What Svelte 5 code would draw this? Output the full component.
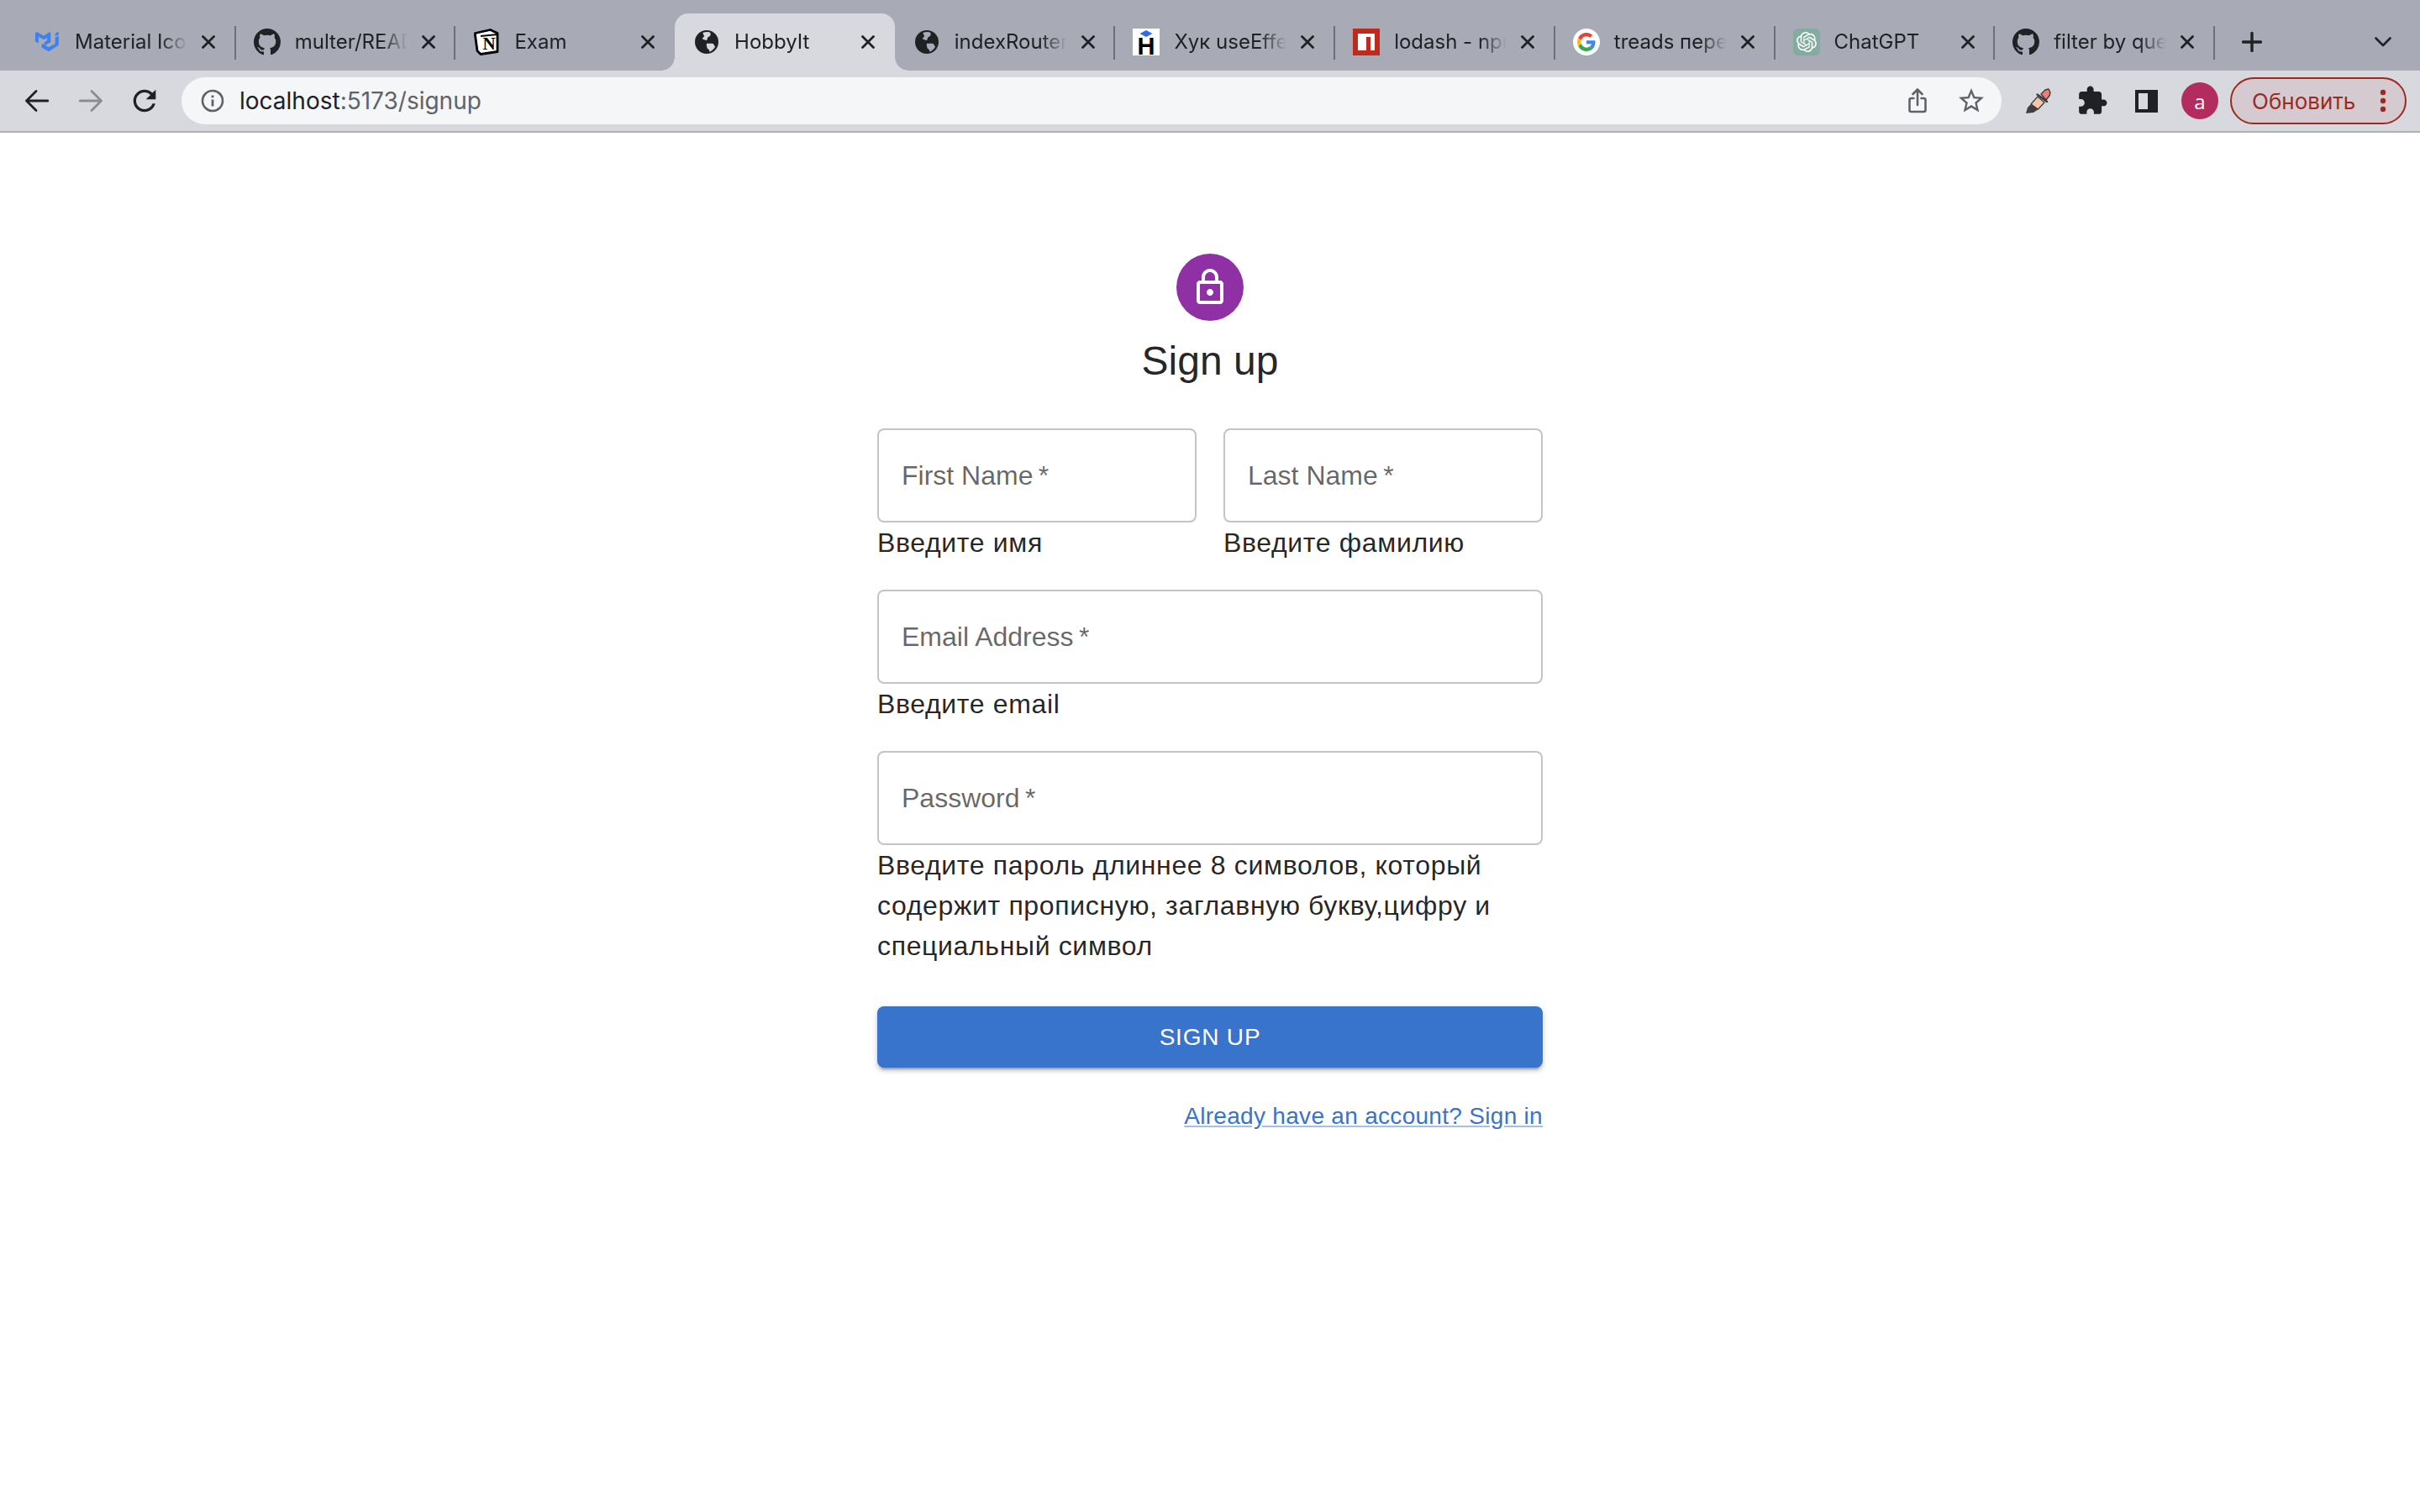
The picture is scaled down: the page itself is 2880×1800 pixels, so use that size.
<script>
  const tabs = [
    { title: 'Material Icons', icon: 'mui' },
    { title: 'multer/README.md', icon: 'github' },
    { title: 'Exam', icon: 'notion' },
    { title: 'HobbyIt', icon: 'globe', active: true },
    { title: 'indexRouter.js', icon: 'globe' },
    { title: 'Хук useEffect', icon: 'hook' },
    { title: 'lodash - npm', icon: 'npm' },
    { title: 'treads перевод', icon: 'google' },
    { title: 'ChatGPT', icon: 'gpt' },
    { title: 'filter by query', icon: 'github' }
  ];

  const noDivider = [2, 3];

  const githubPath = 'M8 0C3.58 0 0 3.58 0 8c0 3.54 2.29 6.53 5.47 7.59.4.07.55-.17.55-.38 0-.19-.01-.82-.01-1.49-2.01.37-2.53-.49-2.69-.94-.09-.23-.48-.94-.82-1.13-.28-.15-.68-.52-.01-.53.63-.01 1.08.58 1.23.82.72 1.21 1.87.87 2.33.66.07-.52.28-.87.51-1.07-1.78-.2-3.64-.89-3.64-3.95 0-.87.31-1.59.82-2.15-.08-.2-.36-1.02.08-2.12 0 0 .67-.21 2.2.82.64-.18 1.32-.27 2-.27.68 0 1.36.09 2 .27 1.53-1.04 2.2-.82 2.2-.82.44 1.1.16 1.92.08 2.12.51.56.82 1.27.82 2.15 0 3.07-1.87 3.75-3.65 3.95.29.25.54.73.54 1.48 0 1.07-.01 1.93-.01 2.2 0 .21.15.46.55.38A8.013 8.013 0 0016 8c0-4.42-3.58-8-8-8z';
  const gptPath = 'M22.2819 9.8211a5.9847 5.9847 0 0 0-.5157-4.9108 6.0462 6.0462 0 0 0-6.5098-2.9A6.0651 6.0651 0 0 0 4.9807 4.1818a5.9847 5.9847 0 0 0-3.9977 2.9 6.0462 6.0462 0 0 0 .7427 7.0966 5.98 5.98 0 0 0 .511 4.9107 6.051 6.051 0 0 0 6.5146 2.9001A5.9847 5.9847 0 0 0 13.2599 24a6.0557 6.0557 0 0 0 5.7718-4.2058 5.9894 5.9894 0 0 0 3.9977-2.9001 6.0557 6.0557 0 0 0-.7475-7.0729zm-9.022 12.6081a4.4755 4.4755 0 0 1-2.8764-1.0408l.1419-.0804 4.7783-2.7582a.7948.7948 0 0 0 .3927-.6813v-6.7369l2.02 1.1686a.071.071 0 0 1 .038.052v5.5826a4.504 4.504 0 0 1-4.4945 4.4944zm-9.6607-4.1254a4.4708 4.4708 0 0 1-.5346-3.0137l.142.0852 4.783 2.7582a.7712.7712 0 0 0 .7806 0l5.8428-3.3685v2.3324a.0804.0804 0 0 1-.0332.0615L9.74 19.9502a4.4992 4.4992 0 0 1-6.1408-1.6464zM2.3408 7.8956a4.485 4.485 0 0 1 2.3655-1.9728V11.6a.7664.7664 0 0 0 .3879.6765l5.8144 3.3543-2.0201 1.1685a.0757.0757 0 0 1-.071 0l-4.8303-2.7865A4.504 4.504 0 0 1 2.3408 7.872zm16.5963 3.8558L13.1038 8.364 15.1192 7.2a.0757.0757 0 0 1 .071 0l4.8303 2.7913a4.4944 4.4944 0 0 1-.6765 8.1042v-5.6772a.79.79 0 0 0-.407-.667zm2.0107-3.0231l-.142-.0852-4.7735-2.7818a.7759.7759 0 0 0-.7854 0L9.409 9.2297V6.8974a.0662.0662 0 0 1 .0284-.0615l4.8303-2.7866a4.4992 4.4992 0 0 1 6.6802 4.66zM8.3065 12.863l-2.02-1.1638a.0804.0804 0 0 1-.038-.0567V6.0742a4.4992 4.4992 0 0 1 7.3757-3.4537l-.142.0805L8.704 5.459a.7948.7948 0 0 0-.3927.6813zm1.0976-2.3654l2.602-1.4998 2.6069 1.4998v2.9994l-2.5974 1.4997-2.6067-1.4997Z';
</script>

<div class="browser">
  <div class="tabstrip">
    {#each tabs as tab, i}
      <div class="tab" class:active={tab.active} class:divided={!noDivider.includes(i)}>
        <span class="favicon">
          {#if tab.icon === 'mui'}
            <svg width="28" height="24" viewBox="0 0 28 24"><path fill="#3B82F0" stroke="#3B82F0" stroke-width=".6" stroke-linejoin="round" d="M0 1.5 2 .5 10 5l7-4.500 1 .6V12l-7 4v-3.500l3.200-2V6.400L10 8.800 3.600 5.200V13L0 11zM24 2l3.500-2v3l-3.500 2zM24 7l3.500-2v10.600L16 23l-8-4.600v-4.200l8 4.400 8-4.400z"/></svg>
          {:else if tab.icon === 'github'}
            <svg width="32" height="32" viewBox="0 0 16 16"><path fill="#202124" fill-rule="evenodd" d={githubPath}/></svg>
          {:else if tab.icon === 'notion'}
            <svg width="32" height="32" viewBox="0 0 32 32">
              <path fill="#fff" stroke="#000" stroke-width="2.8" stroke-linejoin="round" d="M2.500 5.500 20.500 1.500 29 5.500V27.500L9 30.500 5 26.500 2.500 8z"/>
              <path fill="#000" d="M9 8 29 6v2L9 10z"/>
              <text x="19" y="25" text-anchor="middle" class="notion-n">N</text>
            </svg>
          {:else if tab.icon === 'globe'}
            <svg width="28" height="28" viewBox="0 0 16 16"><path fill="#202124" fill-rule="evenodd" d="M8 0a8 8 0 1 0 0 16A8 8 0 0 0 8 0zM5.500 1.600C7.500.9 9.500 1 10.500 1.500l.1 1.500c0 1.200-1.400 1.200-2 2.200-.4.8.2 1.600-1 1.600l-2.100-.6c-.9-.6.3-1.600 1-2.200-.7-.8-1-1.500-1-2.400zM8 9h4c.8.3 1 1.300 1.800 2.200-.9 1.800-2.300 2.900-3.800 3.500-.2-1.200-.5-1.700-1.400-2.100-.6-.6-.2-1.400-.7-2.100z"/></svg>
          {:else if tab.icon === 'hook'}
            <svg width="32" height="32" viewBox="0 0 32 32">
              <rect width="32" height="32" fill="#fff"/>
              <path fill="#2F6BF0" d="M16 2l7.500 4-7.500 4-7.500-4z"/>
              <text x="16" y="31" text-anchor="middle" class="hook-h">Н</text>
            </svg>
          {:else if tab.icon === 'npm'}
            <svg width="32" height="32" viewBox="0 0 32 32"><rect width="32" height="32" fill="#BF2A1D"/><path fill="#fff" d="M6 6h20v20h-5V10h-5v16H6z"/></svg>
          {:else if tab.icon === 'google'}
            <svg width="32" height="32" viewBox="0 0 32 32">
              <circle cx="16" cy="16" r="16" fill="#fff"/>
              <g transform="translate(5 5) scale(.458)">
                <path fill="#EA4335" d="M24 9.500c3.540 0 6.710 1.220 9.210 3.600l6.850-6.850C35.900 2.380 30.470 0 24 0 14.620 0 6.510 5.380 2.560 13.220l7.980 6.190C12.430 13.720 17.740 9.500 24 9.500z"/>
                <path fill="#4285F4" d="M46.980 24.550c0-1.570-.15-3.090-.38-4.550H24v9.020h12.940c-.58 2.960-2.260 5.480-4.780 7.180l7.730 6c4.510-4.180 7.090-10.360 7.090-17.650z"/>
                <path fill="#FBBC05" d="M10.530 28.590c-.48-1.450-.76-2.990-.76-4.590s.27-3.140.76-4.590l-7.980-6.190C.92 16.460 0 20.120 0 24c0 3.880.92 7.540 2.560 10.780l7.970-6.190z"/>
                <path fill="#34A853" d="M24 48c6.480 0 11.930-2.130 15.890-5.810l-7.730-6c-2.150 1.450-4.920 2.300-8.160 2.300-6.260 0-11.570-4.220-13.470-9.910l-7.980 6.190C6.510 42.620 14.620 48 24 48z"/>
              </g>
            </svg>
          {:else if tab.icon === 'gpt'}
            <svg width="32" height="32" viewBox="0 0 32 32">
              <rect width="32" height="32" rx="6" fill="#82AC9D"/>
              <path fill="#fff" transform="translate(4 4)" d={gptPath}/>
            </svg>
          {/if}
        </span>
        <span class="tab-title">{tab.title}</span>
        <svg class="tab-close" width="16" height="16" viewBox="0 0 16 16"><path d="M1.500 1.500l13 13M14.500 1.500l-13 13" stroke="#202124" stroke-width="2.800" stroke-linecap="round"/></svg>
      </div>
    {/each}
    <button class="new-tab" aria-label="New tab">
      <svg width="24" height="24" viewBox="0 0 24 24"><path d="M12 1.500v21M1.500 12h21" stroke="#202124" stroke-width="3.400" stroke-linecap="round"/></svg>
    </button>
    <svg class="tab-search" width="20" height="12" viewBox="0 0 20 12"><path d="M1.500 1.500 10 10l8.500-8.500" fill="none" stroke="#202124" stroke-width="2.600" stroke-linecap="round" stroke-linejoin="round"/></svg>
  </div>

  <div class="toolbar">
    <div class="tool">
      <svg width="28" height="26" viewBox="0 0 28 26"><path d="M27 13H2M13 1.500 1.500 13 13 24.500" fill="none" stroke="#202124" stroke-width="2.800" stroke-linecap="round" stroke-linejoin="round"/></svg>
    </div>
    <div class="tool">
      <svg width="28" height="26" viewBox="0 0 28 26"><path d="M1 13h25M15 1.500 26.500 13 15 24.500" fill="none" stroke="#8B8C90" stroke-width="2.800" stroke-linecap="round" stroke-linejoin="round"/></svg>
    </div>
    <div class="tool">
      <svg width="40" height="40" viewBox="0 0 24 24"><path fill="#202124" d="M17.650 6.350C16.200 4.900 14.210 4 12 4c-4.420 0-7.990 3.580-7.990 8s3.570 8 7.990 8c3.730 0 6.840-2.550 7.730-6h-2.080c-.82 2.330-3.040 4-5.650 4-3.310 0-6-2.690-6-6s2.690-6 6-6c1.660 0 3.140.69 4.220 1.780L13 11h7V4l-2.350 2.350z"/></svg>
    </div>

    <div class="omnibox">
      <svg class="info" width="28" height="28" viewBox="0 0 28 28">
        <circle cx="14" cy="14" r="12" fill="none" stroke="#5F6368" stroke-width="2.600"/>
        <path d="M12.600 12.500h2.800v8h-2.800zM12.600 7.500h2.800v2.800h-2.800z" fill="#5F6368"/>
      </svg>
      <span class="url">localhost<span class="url-rest">:5173/signup</span></span>
      <div class="omni-actions">
        <div class="tool">
          <svg width="24" height="30" viewBox="0 0 24 30"><path d="M7.500 12H4.500a2 2 0 0 0-2 2v12a2 2 0 0 0 2 2h15a2 2 0 0 0 2-2V14a2 2 0 0 0-2-2h-3M12 20V2M6.500 7 12 1.500 17.500 7" fill="none" stroke="#5F6368" stroke-width="2.600" stroke-linecap="round" stroke-linejoin="round"/></svg>
        </div>
        <div class="tool">
          <svg width="36" height="36" viewBox="0 0 24 24"><path fill="#5F6368" d="M22 9.240l-7.190-.62L12 2 9.190 8.630 2 9.240l5.460 4.730L5.820 21 12 17.270 18.180 21l-1.630-7.030L22 9.240zM12 15.400l-3.760 2.270 1-4.280-3.320-2.880 4.380-.38L12 6.100l1.710 4.040 4.380.38-3.320 2.880 1 4.280L12 15.400z"/></svg>
        </div>
      </div>
    </div>

    <div class="tool">
      <svg width="30" height="30" viewBox="0 0 30 30">
        <path fill="#3F3F41" d="M6 19l9 6-6 4-9 1 2-7z"/>
        <path fill="#F3C7A8" stroke="#3A3A3C" stroke-width="1.200" stroke-linejoin="round" d="M14 10l8 7-7.500 8L6 19z"/>
        <path fill="#EE7F78" stroke="#3A3A3C" stroke-width="1.400" stroke-linejoin="round" d="M18 7l5-5 4-1 2 4-1 4-4 5z"/>
        <path d="M13.500 7.500 25 16" stroke="#3A3A3C" stroke-width="2.400" stroke-linecap="round"/>
      </svg>
    </div>
    <div class="tool">
      <svg width="38" height="38" viewBox="0 0 24 24"><path fill="#202124" d="M20.500 11H19V7c0-1.100-.9-2-2-2h-4V3.500C13 2.120 11.880 1 10.500 1S8 2.120 8 3.500V5H4c-1.100 0-1.990.9-1.990 2v3.800H3.500c1.490 0 2.700 1.210 2.700 2.700s-1.210 2.700-2.700 2.700H2V20c0 1.100.9 2 2 2h3.800v-1.500c0-1.490 1.210-2.700 2.700-2.700 1.490 0 2.700 1.210 2.700 2.700V22H17c1.100 0 2-.9 2-2v-4h1.500c1.380 0 2.500-1.120 2.500-2.500S21.880 11 20.500 11z"/></svg>
    </div>
    <div class="tool">
      <svg width="27" height="27" viewBox="0 0 27 27"><path fill="#202124" fill-rule="evenodd" d="M0 0h27v27H0zM4 4v19h11V4z"/></svg>
    </div>
    <div class="tool">
      <span class="profile">a</span>
    </div>
    <button class="update">
      <span>Обновить</span>
      <svg width="8" height="28" viewBox="0 0 8 28"><circle cx="4" cy="4" r="3.200" fill="#9C2A1E"/><circle cx="4" cy="14" r="3.200" fill="#9C2A1E"/><circle cx="4" cy="24" r="3.200" fill="#9C2A1E"/></svg>
    </button>
  </div>

  <main class="page">
    <div class="paper">
      <div class="avatar">
        <svg width="48" height="48" viewBox="0 0 24 24"><path fill="#fff" d="M18 8h-1V6c0-2.760-2.240-5-5-5S7 3.240 7 6v2H6c-1.100 0-2 .9-2 2v10c0 1.100.9 2 2 2h12c1.100 0 2-.9 2-2V10c0-1.100-.9-2-2-2zM9 6c0-1.660 1.340-3 3-3s3 1.340 3 3v2H9V6zm9 14H6V10h12v10zm-6-3c1.100 0 2-.9 2-2s-.9-2-2-2-2 .9-2 2 .9 2 2 2z"/></svg>
      </div>
      <h1>Sign up</h1>
      <form class="form" onsubmit={(e) => e.preventDefault()}>
        <div class="grid">
          <div>
            <input class="field" placeholder="First Name&thinsp;*" />
            <div class="hint">Введите имя</div>
          </div>
          <div>
            <input class="field" placeholder="Last Name&thinsp;*" />
            <div class="hint">Введите фамилию</div>
          </div>
          <div class="wide">
            <input class="field" placeholder="Email Address&thinsp;*" />
            <div class="hint">Введите email</div>
          </div>
          <div class="wide">
            <input class="field" type="password" placeholder="Password&thinsp;*" />
            <div class="hint">Введите пароль длиннее 8 символов, который содержит прописную, заглавную букву,цифру и специальный символ</div>
          </div>
        </div>
        <button class="submit" type="submit">Sign up</button>
        <div class="signin">
          <a href="#signin">Already have an account? Sign in</a>
        </div>
      </form>
    </div>
  </main>
</div>

<style>
  :global(body) {
    margin: 0;
    background: #fff;
  }

  .browser {
    min-height: 1800px;
    font-family: "Liberation Sans", Arial, sans-serif;
    color: #202124;
  }

  /* tab strip */
  .tabstrip {
    height: 84px;
    background: #a8aab5;
    display: flex;
    align-items: flex-end;
    padding-left: 18px;
    box-sizing: border-box;
    position: relative;
  }

  .tab {
    position: relative;
    width: 261.7px;
    height: 68px;
    flex: none;
    display: flex;
    align-items: center;
    padding-left: 22px;
    box-sizing: border-box;
    border-radius: 16px 16px 0 0;
    font-family: Inter, "Noto Sans", sans-serif;
  }

  .tab.divided::after {
    content: "";
    position: absolute;
    right: -1px;
    top: 15px;
    width: 2px;
    height: 40px;
    background: #6e7079;
  }

  .tab.active {
    background: #d8d9de;
  }

  .tab.active::before {
    content: "";
    position: absolute;
    left: -16px;
    right: -16px;
    bottom: 0;
    height: 16px;
    background:
      radial-gradient(circle at 0 0, #a8aab5 15.5px, #d8d9de 16px) left bottom / 16px 16px no-repeat,
      radial-gradient(circle at 100% 0, #a8aab5 15.5px, #d8d9de 16px) right bottom / 16px 16px no-repeat;
  }

  .favicon {
    width: 32px;
    height: 32px;
    flex: none;
    display: flex;
    align-items: center;
    justify-content: center;
  }

  .favicon svg {
    display: block;
  }

  .notion-n {
    font-family: "Liberation Serif", serif;
    font-weight: 700;
    font-size: 21px;
    fill: #000;
  }

  .hook-h {
    font-family: "Liberation Sans", sans-serif;
    font-weight: 700;
    font-size: 29px;
    fill: #000;
  }

  .tab-title {
    margin-left: 17px;
    width: 134px;
    flex: none;
    overflow: hidden;
    white-space: nowrap;
    font-size: 24px;
    line-height: 32px;
    color: #202124;
    -webkit-mask-image: linear-gradient(to right, #000 76%, transparent 100%);
    mask-image: linear-gradient(to right, #000 76%, transparent 100%);
  }

  .tab-close {
    margin-left: 17px;
    flex: none;
    position: relative;
    z-index: 1;
  }

  .new-tab {
    border: 0;
    background: none;
    padding: 0;
    margin-left: 33px;
    margin-bottom: 22px;
    display: flex;
  }

  .tab-search {
    margin-left: auto;
    margin-right: 34px;
    margin-bottom: 28px;
  }

  /* toolbar */
  .toolbar {
    height: 74px;
    box-sizing: border-box;
    background: #d8d9de;
    border-bottom: 2px solid #b0b1b5;
    display: flex;
    align-items: flex-start;
    padding: 8px 16px 0 12px;
    position: relative;
  }

  .tool {
    width: 64px;
    height: 56px;
    flex: none;
    display: flex;
    align-items: center;
    justify-content: center;
  }

  .omnibox {
    flex: 1;
    height: 56px;
    margin: 0 12px;
    padding: 0 4px 0 23px;
    background: #f5f6f8;
    border-radius: 28px;
    display: flex;
    align-items: center;
    min-width: 0;
  }

  .info {
    flex: none;
  }

  .url {
    margin-left: 18px;
    font-family: Inter, "Noto Sans", sans-serif;
    font-size: 28px;
    color: #202124;
  }

  .url-rest {
    color: #5f6368;
  }

  .omni-actions {
    margin-left: auto;
    display: flex;
  }

  .profile {
    width: 44px;
    height: 44px;
    border-radius: 50%;
    background: #b32c5e;
    color: #fff;
    font-family: "Open Sans", sans-serif;
    font-size: 24px;
    display: flex;
    align-items: center;
    justify-content: center;
  }

  .update {
    width: 210px;
    height: 56px;
    margin-left: 4px;
    flex: none;
    box-sizing: border-box;
    padding: 0 22px 0 24px;
    border: 2.5px solid #9c2a1e;
    border-radius: 28px;
    background: #d5cacf;
    color: #9c2a1e;
    font-family: Inter, "Noto Sans", sans-serif;
    font-size: 26px;
    display: flex;
    align-items: center;
    justify-content: space-between;
  }

  /* sign up page */
  .page {
    width: 888px;
    margin: 0 auto;
    padding: 0 48px;
    box-sizing: border-box;
  }

  .paper {
    margin-top: 128px;
    display: flex;
    flex-direction: column;
    align-items: center;
    color: rgba(0, 0, 0, 0.87);
  }

  .avatar {
    width: 80px;
    height: 80px;
    margin: 16px;
    border-radius: 50%;
    background: #9030a5;
    display: flex;
    align-items: center;
    justify-content: center;
  }

  h1 {
    margin: 0;
    font-size: 48px;
    font-weight: 400;
    line-height: 64px;
  }

  .form {
    width: 100%;
    margin-top: 48px;
  }

  .grid {
    display: grid;
    grid-template-columns: 1fr 1fr;
    gap: 32px;
  }

  .wide {
    grid-column: span 2;
  }

  .field {
    display: block;
    width: 100%;
    height: 112px;
    box-sizing: border-box;
    padding: 0 27px;
    border: 2px solid #c4c4c4;
    border-radius: 8px;
    background: #fff;
    font-family: inherit;
    font-size: 32px;
    outline: none;
  }

  .field::placeholder {
    color: rgba(0, 0, 0, 0.6);
    opacity: 1;
  }

  .hint {
    font-size: 32px;
    line-height: 48px;
    letter-spacing: 0.65px;
  }

  .submit {
    display: block;
    width: 100%;
    height: 73px;
    margin: 48px 0 32px;
    border: 0;
    border-radius: 8px;
    background: #3873cc;
    color: #fff;
    font-family: inherit;
    font-size: 28px;
    font-weight: 500;
    letter-spacing: 0.8px;
    text-transform: uppercase;
    box-shadow: 0 6px 2px -4px rgba(0, 0, 0, 0.2), 0 4px 4px rgba(0, 0, 0, 0.14), 0 2px 10px rgba(0, 0, 0, 0.12);
  }

  .signin {
    text-align: right;
    font-size: 32px;
    line-height: 48px;
  }

  .signin a {
    font-size: 28px;
    letter-spacing: 0.3px;
    color: #3873cc;
    text-decoration: underline;
    text-decoration-color: rgba(56, 115, 204, 0.45);
  }
</style>
